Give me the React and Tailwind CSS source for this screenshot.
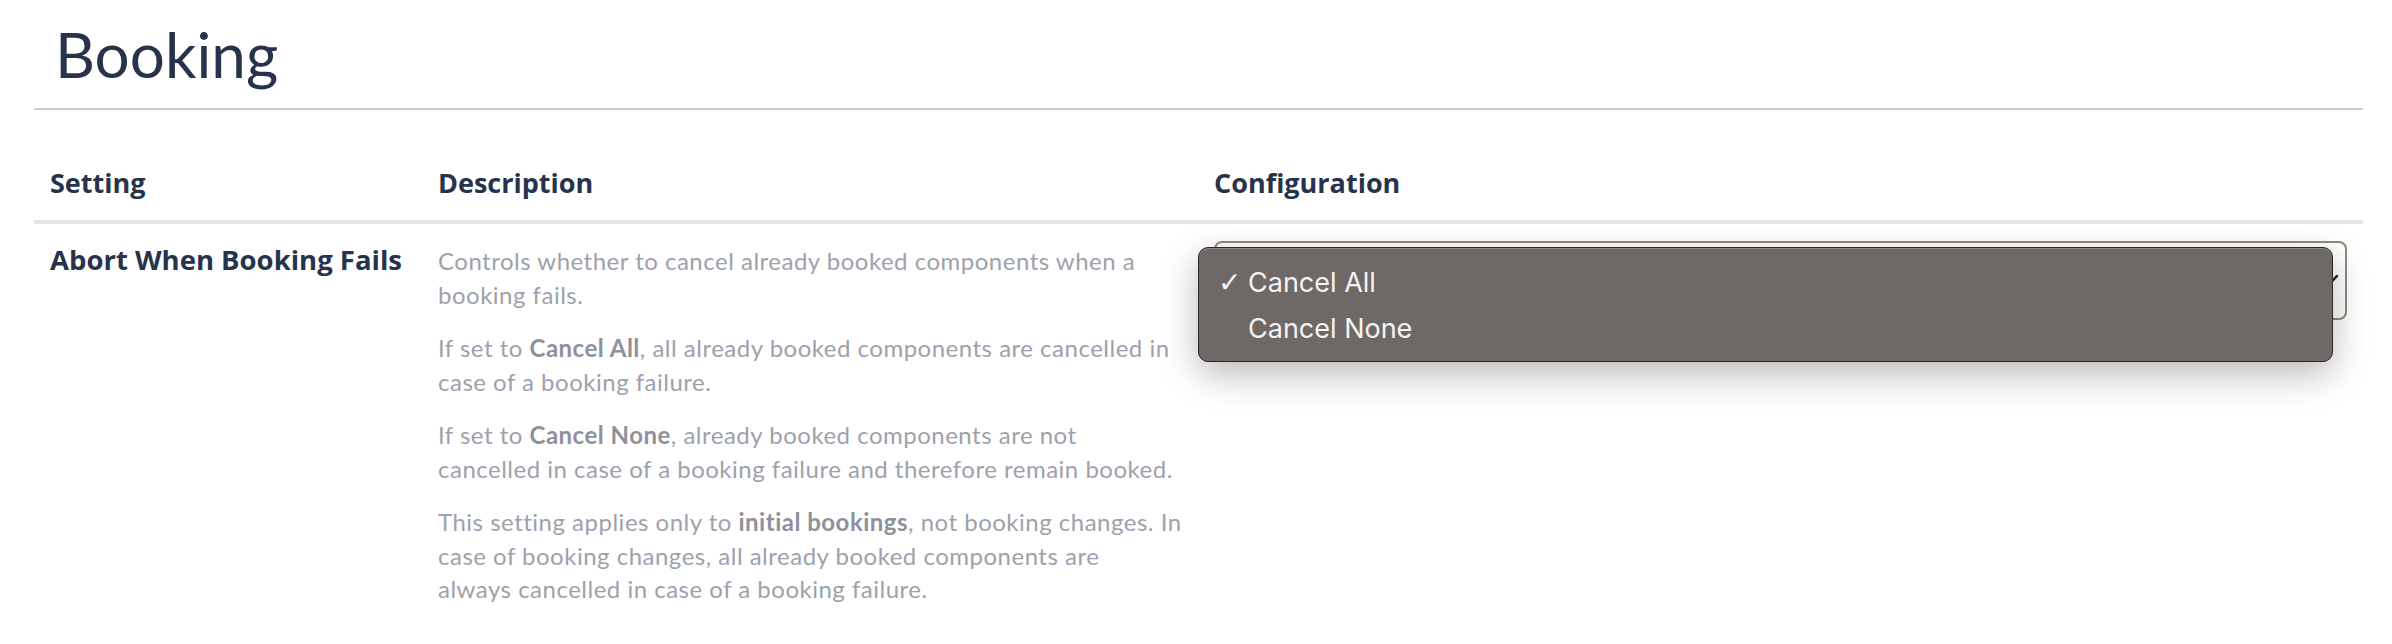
const Option = ({ label, selected }) => (
    <div className="flex items-center h-[46px] text-[27px] leading-[46px] text-[#f4f3f2]">
        <span className="w-[30px] text-[28px] font-['DejaVu_Sans',sans-serif]">{selected ? "✓" : ""}</span>
        <span>{label}</span>
    </div>
);

const App = () => {
    return (
        <div className="min-h-screen bg-white pl-[34px] pr-[29px] font-['Lato',sans-serif]">
            {/* page title */}
            <div className="border-b-2 border-[#cccccc] pl-[21px] pt-[17px] pb-[17px]">
                <h1 className="text-[62px] leading-[74px] font-normal text-[#27334d]">Booking</h1>
            </div>

            {/* settings table */}
            <div className="mt-[37px] grid grid-cols-[388px_776px_1fr] font-['Open_Sans',sans-serif] text-[27px] font-bold leading-[40px] text-[#27334d] border-b-4 border-[#e5e5e5]">
                <div className="px-4 pt-4 pb-[17px]">Setting</div>
                <div className="px-4 pt-4 pb-[17px]">Description</div>
                <div className="px-4 pt-4 pb-[17px]">Configuration</div>
            </div>

            <div className="grid grid-cols-[388px_776px_1fr] items-start">
                <div className="px-4 pt-[18px] font-['Open_Sans',sans-serif] text-[27.5px] font-bold leading-[36px] whitespace-nowrap text-[#27334d]">
                    Abort When Booking Fails
                </div>
                <div className="pl-4 pr-[12px] pt-5 text-[24px] leading-[33.5px] tracking-[0.5px] text-[#9ea1ab] flex flex-col gap-[20px]">
                    <p>Controls whether to cancel already booked components when a booking fails.</p>
                    <p>
                        If set to <b className="font-bold text-[#8e919b]">Cancel All</b>, all already booked components are
                        cancelled in case of a booking failure.
                    </p>
                    <p>
                        If set to <b className="font-bold text-[#8e919b]">Cancel None</b>, already booked components are not
                        <br />
                        cancelled in case of a booking failure and therefore remain booked.
                    </p>
                    <p>
                        This setting applies only to <b className="font-bold text-[#8e919b]">initial bookings</b>, not booking
                        changes. In case of booking changes, all already booked components are
                        <br />
                        always cancelled in case of a booking failure.
                    </p>
                </div>
                <div className="relative px-4 pt-[17px]">
                    {/* the select itself */}
                    <div className="flex h-[79px] items-center justify-end rounded-[8px] border-2 border-[#8d8b7a] bg-white pr-[6px]">
                        <svg width="24" height="14" viewBox="0 0 24 14" fill="none" stroke="#27334d" strokeWidth="2.5" strokeLinecap="round" strokeLinejoin="round">
                            <polyline points="2,2 12,12 22,2" />
                        </svg>
                    </div>

                    {/* open native menu */}
                    <div className="absolute left-0 top-[23px] w-[1135px] rounded-[10px] border border-[#2a2827] bg-[#6e6966] pl-[19px] pt-[12px] pb-[9px] shadow-[inset_0_1px_0_#8e8986,0_12px_36px_rgba(0,0,0,0.28)] font-['Inter',sans-serif]">
                        <Option label="Cancel All" selected />
                        <Option label="Cancel None" />
                    </div>
                </div>
            </div>
        </div>
    );
};

export default App;
